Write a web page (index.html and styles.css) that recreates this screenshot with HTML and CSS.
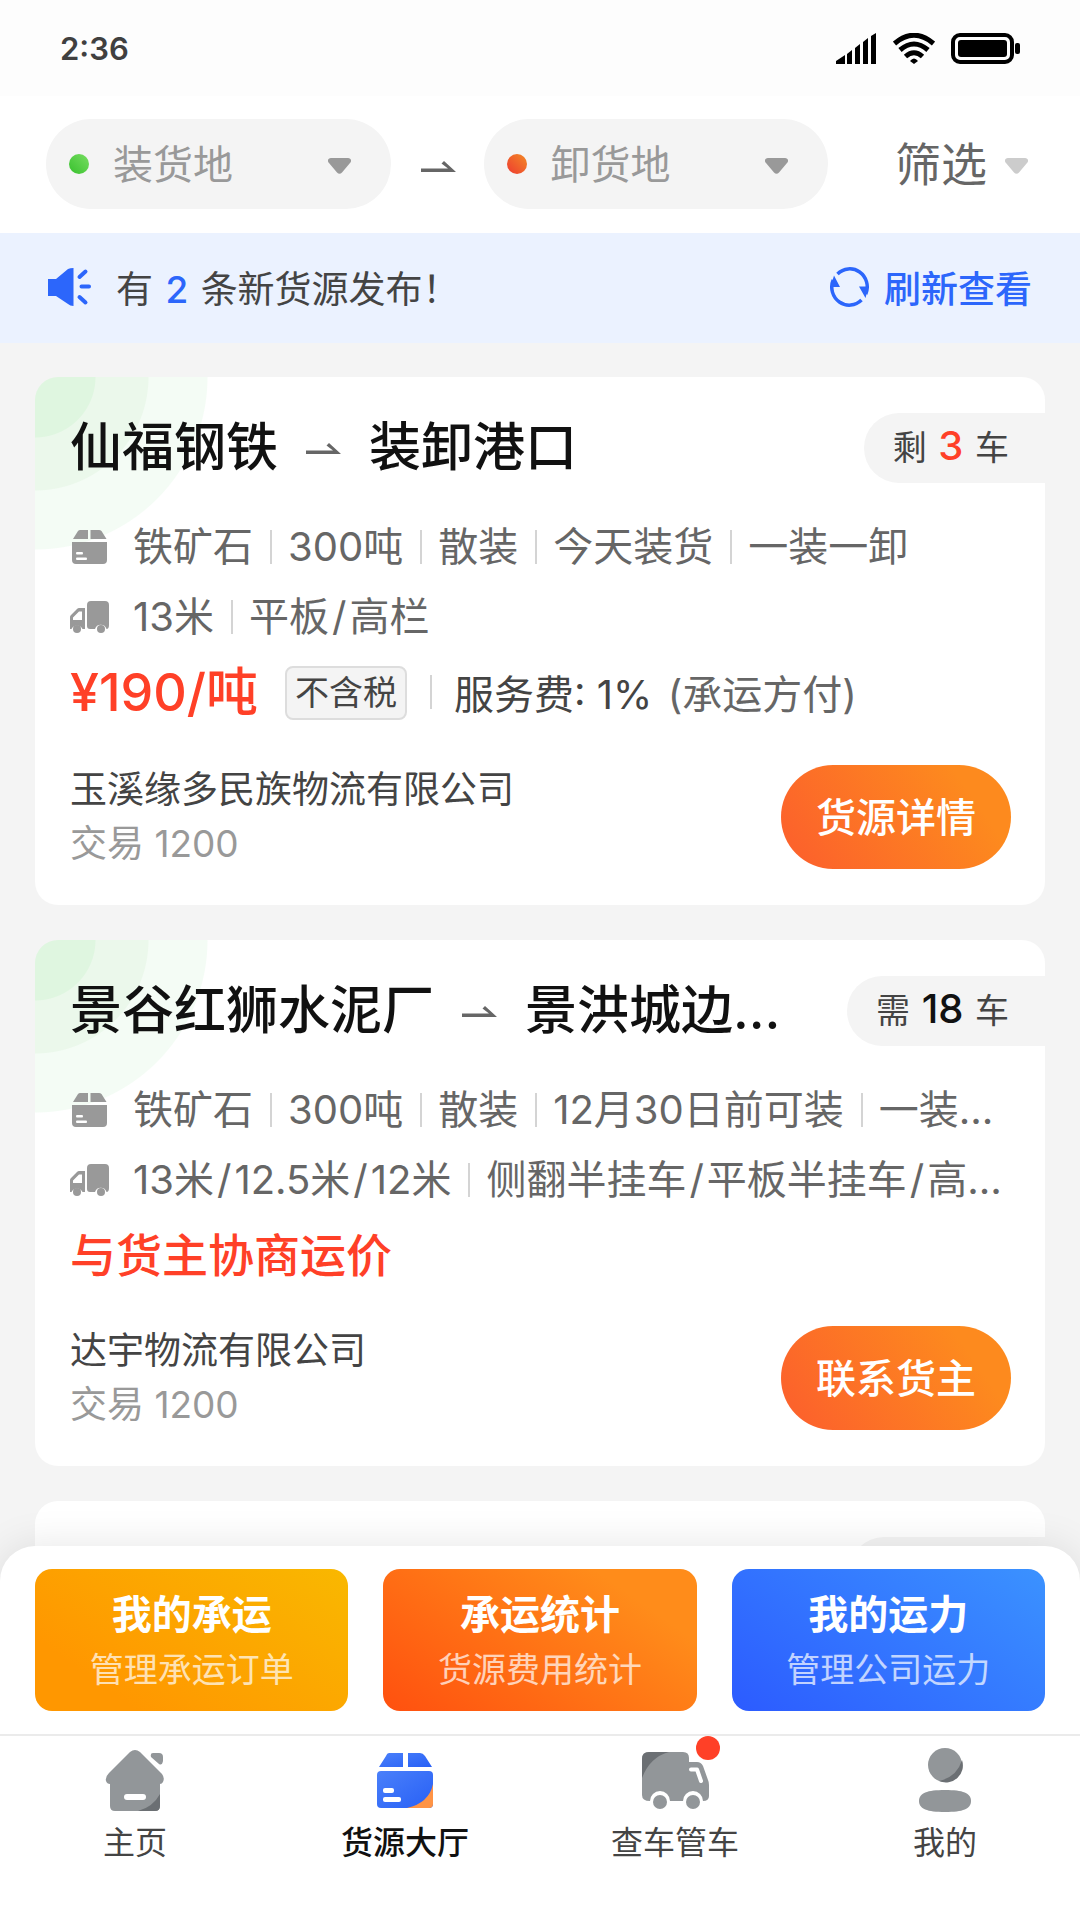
FILE: index.html
```html
<!DOCTYPE html>
<html lang="zh-CN">
<head>
<meta charset="utf-8">
<meta name="viewport" content="width=device-width, initial-scale=1">
<title>货源大厅</title>
<link rel="stylesheet" href="styles.css">
</head>
<body>
<svg class="defs" width="0" height="0" aria-hidden="true">
  <defs>
    <symbol id="caret" viewBox="0 0 23 16"><path d="M3 0H20C23 0 24 3 22 5L14 14.500Q11.500 17 9 14.500L1 5C-1 3 0 0 3 0Z"/></symbol>
    <symbol id="arrow" viewBox="0 0 35 11"><path d="M0 11V7.500H27L20.500 2.500L23 0L35 11Z"/></symbol>
    <symbol id="box" viewBox="0 0 36 36"><path d="M8 1H16V10H1L6 2Q7 1 8 1ZM18.500 1H27Q28.500 1 29.500 2L34.500 10H18.500Z"/><path fill-rule="evenodd" d="M0 13H35V31Q35 35 31 35H4Q0 35 0 31ZM5 23H10Q11 23 11 24.300T10 25.500H5Q4 25.500 4 24.300T5 23ZM5 28.500H14Q15 28.500 15 29.800T14 31H5Q4 31 4 29.800T5 28.500Z"/></symbol>
    <symbol id="lorry" viewBox="0 0 39 32"><path d="M21 0H35Q39 0 39 4V24Q39 28 36.500 28A6 6 0 0 0 25 28H20Q17 28 17 25V4Q17 0 21 0Z"/><path fill-rule="evenodd" d="M9 7H15V28H12.500A6 6 0 0 0 1.500 28H0V16Q0 15 1 14L7 8Q8 7 9 7ZM9 10.500L3 16.500V19H12V10.500Z"/><circle cx="7" cy="28" r="4"/><circle cx="31" cy="28" r="4"/></symbol>
  </defs>
</svg>
<div class="app">
  <header class="status">
    <time class="clock">2:36</time>
    <div class="status-icons">
      <svg width="41" height="31" viewBox="0 0 41 31"><path d="M0 31V28L9 22V31ZM11 31V21L16 17V31ZM19 31V15L24 11V31ZM27 31V9L32 5V31ZM35 31V3L40 0V31Z"/></svg>
      <svg width="42" height="31" viewBox="0 0 42 31" fill="none" stroke="#000" stroke-width="5"><path d="M1.500 10.500Q21 -6 40.500 10.500M7 17Q21 5 35 17M12.500 23.500Q21 16 29.500 23.500"/><path fill="#000" stroke="none" d="M17 28Q21 23 25 28L21 31Z"/></svg>
      <svg width="69" height="31" viewBox="0 0 69 31"><rect x="2" y="2" width="59" height="27" rx="7" fill="none" stroke="#000" stroke-width="4"/><rect x="7" y="7" width="49" height="17" rx="3"/><rect x="64" y="10" width="5" height="11" rx="2"/></svg>
    </div>
  </header>

  <div class="filters">
    <label class="place">
      <span class="dot dot-from"></span>
      <select class="place-select" aria-label="装货地"><option>装货地</option></select>
      <svg class="caret" width="23" height="16"><use href="#caret"/></svg>
    </label>
    <svg class="arrow" width="35" height="11"><use href="#arrow"/></svg>
    <label class="place">
      <span class="dot dot-to"></span>
      <select class="place-select" aria-label="卸货地"><option>卸货地</option></select>
      <svg class="caret" width="23" height="16"><use href="#caret"/></svg>
    </label>
    <button class="filter-btn" type="button">筛选<svg class="caret caret-light" width="23" height="16"><use href="#caret"/></svg></button>
  </div>

  <div class="notice">
    <svg width="44" height="38" viewBox="0 0 44 38" fill="#2c66fb"><path d="M0 11H8L20 1Q22 0 25.500 0V38Q22 38 20 36L8 28H0Z"/><path fill="none" stroke="#2c66fb" stroke-width="4" stroke-linecap="round" d="M31.500 9L37.500 3.500M33.500 18.500H41M31.500 29L37.500 34.500"/></svg>
    <p class="notice-text">有 <b>2</b> 条新货源发布！</p>
    <button class="refresh" type="button">
      <svg width="39" height="40" viewBox="0 0 39 40" fill="none" stroke="#2c66fb" stroke-width="3.500"><path d="M7.500 7A17.500 18 0 0 1 35.800 27M31.500 33A17.500 18 0 0 1 3.200 13"/><path fill="#2c66fb" stroke="none" d="M29 19.500H38.500L35.500 31ZM10 20H0.500L4 8.500Z"/></svg>
      刷新查看
    </button>
  </div>

  <main class="list">
    <article class="card">
      <div class="head">
        <h2 class="route"><span>仙福钢铁</span><svg class="arrow" width="35" height="11"><use href="#arrow"/></svg><span class="dest">装卸港口</span></h2>
        <p class="count">剩 <b class="hot">3</b> 车</p>
      </div>
      <div class="facts">
        <svg class="fact-icon" width="36" height="36"><use href="#box"/></svg>
        <ul><li>铁矿石</li><li>300吨</li><li>散装</li><li>今天装货</li><li>一装一卸</li></ul>
      </div>
      <div class="facts">
        <svg class="fact-icon fact-lorry" width="39" height="32"><use href="#lorry"/></svg>
        <ul><li>13米</li><li>平板<span class="or">/</span>高栏</li></ul>
      </div>
      <div class="price-row">
        <strong class="price">¥190/吨</strong>
        <span class="tax">不含税</span>
        <p class="fee">服务费: 1% <span>(承运方付)</span></p>
      </div>
      <div class="foot">
        <div class="owner"><p>玉溪缘多民族物流有限公司</p><p class="deals">交易 1200</p></div>
        <button class="cta" type="button">货源详情</button>
      </div>
    </article>

    <article class="card">
      <div class="head">
        <h2 class="route"><span>景谷红狮水泥厂</span><svg class="arrow" width="35" height="11"><use href="#arrow"/></svg><span class="dest">景洪城边…</span></h2>
        <p class="count">需 <b>18</b> 车</p>
      </div>
      <div class="facts">
        <svg class="fact-icon" width="36" height="36"><use href="#box"/></svg>
        <ul><li>铁矿石</li><li>300吨</li><li>散装</li><li>12月30日前可装</li><li>一装…</li></ul>
      </div>
      <div class="facts">
        <svg class="fact-icon fact-lorry" width="39" height="32"><use href="#lorry"/></svg>
        <ul><li>13米<span class="or">/</span>12.5米<span class="or">/</span>12米</li><li>侧翻半挂车<span class="or">/</span>平板半挂车<span class="or">/</span>高…</li></ul>
      </div>
      <div class="price-row">
        <strong class="price price-talk">与货主协商运价</strong>
      </div>
      <div class="foot">
        <div class="owner"><p>达宇物流有限公司</p><p class="deals">交易 1200</p></div>
        <button class="cta" type="button">联系货主</button>
      </div>
    </article>

    <article class="card card-next">
      <div class="head"><span class="count count-empty"></span></div>
    </article>
  </main>

  <footer class="dock">
    <div class="quick">
      <a class="quick-card amber" href="#orders"><b>我的承运</b><span>管理承运订单</span></a>
      <a class="quick-card orange" href="#stats"><b>承运统计</b><span>货源费用统计</span></a>
      <a class="quick-card blue" href="#fleet"><b>我的运力</b><span>管理公司运力</span></a>
    </div>
    <nav class="tabs">
      <a class="tab" href="#home">
        <svg width="68" height="66" viewBox="0 0 68 66"><path fill="#929699" d="M29 4Q34 0 39 4L61 26Q64 30 62 34Q61 36 59 36V58Q59 63 54 63H14Q9 63 9 58V36Q6 36 5 33Q4 29 8 25ZM52 5H58Q62 5 62 9V13Q61 18 58 16L50 9Q49 5 52 5Z"/><path fill="#6b6f73" d="M59 46V58Q59 63 54 63H37Q52 59 59 46Z"/><rect x="23" y="46" width="22" height="6" rx="3" fill="#fff"/></svg>
        <span>主页</span>
      </a>
      <a class="tab active" href="#hall" aria-current="page">
        <svg width="68" height="66" viewBox="0 0 68 66"><defs><linearGradient id="bluebox" x1="0" y1="0" x2="1" y2="1"><stop offset="0" stop-color="#4a80fa"/><stop offset="1" stop-color="#2860f6"/></linearGradient></defs><path fill="url(#bluebox)" d="M18 5H32V19H8L15 8Q16 5 18 5ZM37 5H49Q52 5 54 8L61 19H37Z"/><path fill="url(#bluebox)" d="M10 23H58Q62 23 62 27V56Q62 60 58 60H10Q6 60 6 56V27Q6 23 10 23Z"/><path fill="#ff9445" d="M62 36V56Q62 60 58 60H36Q58 55 62 36Z"/><rect x="12" y="40" width="11" height="5" rx="2" fill="#fff"/><rect x="12" y="49" width="18" height="5" rx="2" fill="#fff"/></svg>
        <span>货源大厅</span>
      </a>
      <a class="tab" href="#trucks">
        <svg width="68" height="66" viewBox="0 0 68 66"><path fill="#929699" d="M8 4H42Q48 4 48 10V14H56Q60 14 62 18L67 32Q68 34 68 37V48Q68 53 62 53A10 10 0 0 0 42 53H29A10 10 0 0 0 9 53Q1 53 1 47V11Q1 4 8 4Z"/><path fill="#6b6f73" d="M28 4H8Q1 4 1 11V30Q9 9 28 4Z"/><path fill="none" stroke="#fff" stroke-width="4" stroke-linecap="round" stroke-linejoin="round" d="M50 21.500H56L60 33"/><circle cx="19" cy="54" r="7" fill="#929699"/><circle cx="52" cy="54" r="7" fill="#929699"/></svg>
        <span>查车管车</span>
        <i class="alert"></i>
      </a>
      <a class="tab" href="#me">
        <svg width="68" height="66" viewBox="0 0 68 66"><circle cx="34" cy="17" r="17" fill="#929699"/><path fill="#6b6f73" d="M51 12A17 17 0 0 1 28 33Q46 29 51 12Z"/><path fill="#929699" d="M8 53C8 45 16 42 34 42S60 45 60 53S52 64 34 64S8 61 8 53Z"/></svg>
        <span>我的</span>
      </a>
    </nav>
  </footer>
</div>
</body>
</html>
```
FILE: styles.css
```css
* { box-sizing: border-box; }
body, h2, p, ul { margin: 0; padding: 0; }
body {
  font-family: Inter, "Noto Sans CJK SC", sans-serif;
  font-size: 40px;
  color: #444;
  background: #f4f4f4;
}
ul { list-style: none; }
a { color: inherit; text-decoration: none; }
b, strong, h2 { font-weight: 500; }
button, select {
  font: inherit;
  color: inherit;
  background: none;
  border: 0;
  padding: 0;
  appearance: none;
}
svg { flex: none; display: block; }
.defs { position: absolute; }

.app {
  display: flex;
  flex-direction: column;
  height: 100vh;
  overflow: hidden;
}

/* status bar */
.status {
  flex: none;
  display: flex;
  align-items: center;
  justify-content: space-between;
  height: 96px;
  padding: 0 60px;
  background: #fdfdfd;
}
.clock { font-size: 31px; font-weight: 600; color: #404040; }
.status-icons { display: flex; gap: 16px; }

/* place filters */
.filters {
  flex: none;
  display: flex;
  align-items: center;
  padding: 23px 52px 24px 46px;
  background: #fff;
}
.place {
  flex: 1;
  min-width: 0;
  display: flex;
  align-items: center;
  height: 90px;
  padding: 0 40px 0 23px;
  border-radius: 45px;
  background: #f4f4f4;
}
.dot { flex: none; width: 20px; height: 20px; border-radius: 50%; }
.dot-from { background: linear-gradient(45deg, #37c02d, #78de62); }
.dot-to { background: linear-gradient(45deg, #ee3a30, #f28a26); }
.place-select { flex: 1; min-width: 0; margin-left: 24px; color: #999; opacity: 1; }
.caret { margin-top: 3px; fill: #999; }
.caret-light { fill: #ccc; }
.arrow { fill: #666; }
.filters .arrow { margin: 4px 28px 0 30px; }
.filter-btn {
  display: flex;
  align-items: center;
  gap: 18px;
  margin-left: 67px;
  font-size: 46px;
  line-height: 60px;
  color: #666;
}

/* new cargo notice */
.notice {
  flex: none;
  display: flex;
  align-items: center;
  height: 110px;
  padding: 0 48px 3px;
  background: #ebf2ff;
  font-size: 37px;
}
.notice-text { margin-left: 24px; }
.notice-text b { margin: 0 2px; color: #2c66fb; }
.refresh {
  display: flex;
  align-items: center;
  gap: 15px;
  margin-left: auto;
  font-weight: 500;
  color: #2c66fb;
}

/* cargo cards */
.list {
  flex: 1;
  min-height: 0;
  display: flex;
  flex-direction: column;
  gap: 35px;
  padding: 34px 35px 0;
  overflow: hidden;
}
.card {
  flex: none;
  padding: 36px 34px 34px 35px;
  border-radius: 23px;
  background: radial-gradient(circle at 0 0, #dff6e0 60px, #ebf8eb 61px, #ebf8eb 113px, #f4fcf5 114px, #f4fcf5 172px, #fff 173px);
}
.card-next { height: 526px; background: #fff; }
.head {
  display: flex;
  justify-content: space-between;
  gap: 35px;
  height: 70px;
  margin: 0 -34px 29px 0;
}
.route {
  flex: 0 1 auto;
  min-width: 0;
  display: flex;
  align-items: center;
  gap: 28px;
  font-size: 52px;
  line-height: 74px;
  white-space: nowrap;
  color: #111;
}
.route .arrow { flex: none; }
.dest { min-width: 0; overflow: hidden; text-overflow: ellipsis; }
.count {
  flex: none;
  margin-left: auto;
  padding: 0 36px 0 29px;
  border-radius: 35px 0 0 35px;
  background: #f4f4f4;
  font-size: 34px;
  line-height: 70px;
}
.count b { margin: 0 2px; font-size: 40px; line-height: 40px; color: #111; }
.count .hot { color: #ff4027; }
.count-empty { width: 196px; }
.facts {
  display: flex;
  align-items: center;
  height: 70px;
  color: #666;
}
.fact-icon { margin: 0 25px 0 2px; fill: #999; }
.fact-lorry { margin: 0 24px 0 0; }
.facts ul { flex: 1; min-width: 0; display: flex; }
.facts li { flex: none; line-height: 60px; white-space: nowrap; }
.facts li:last-child { flex: 0 1 auto; min-width: 0; overflow: hidden; text-overflow: ellipsis; }
.or { margin: 0 3px; }
.facts li + li, .fee {
  margin-left: 17px;
  padding-left: 18px;
  background: linear-gradient(#d4d4d4, #d4d4d4) 0 50% / 2px 34px no-repeat;
}
.price-row { display: flex; align-items: center; min-height: 80px; }
.price { font-size: 52px; line-height: 82px; color: #ff4027; }
.price-talk { font-size: 46px; line-height: 80px; }
.tax {
  margin-left: 27px;
  padding: 0 8px;
  border: 2px solid #ddd;
  border-radius: 8px;
  background: #f4f4f4;
  font-size: 34px;
  line-height: 50px;
}
.fee { margin: 0 0 3px 23px; padding-left: 24px; }
.fee span { margin-left: 4px; color: #666; }
.foot {
  display: flex;
  align-items: center;
  justify-content: space-between;
  margin-top: 29px;
}
.owner { font-size: 37px; line-height: 54px; }
.deals { color: #999; }
.cta {
  height: 104px;
  padding: 0 35px 4px;
  border-radius: 52px;
  background: linear-gradient(55deg, #fc632b 10%, #fd8a1e 80%);
  font-weight: 500;
  color: #fff;
}

/* bottom dock */
.dock {
  flex: none;
  position: relative;
  margin-top: -36px;
  border-radius: 35px 35px 0 0;
  background: #fff;
  box-shadow: 0 0 40px rgba(0, 0, 0, .1);
}
.quick {
  display: grid;
  grid-template-columns: repeat(3, 1fr);
  gap: 35px;
  padding: 23px 35px;
  border-bottom: 2px solid #ebebeb;
}
.quick-card {
  display: flex;
  flex-direction: column;
  align-items: center;
  padding: 18px 0 14px;
  border-radius: 17px;
  color: #fff;
}
.quick-card b { font-weight: 600; line-height: 56px; }
.quick-card span { font-size: 34px; line-height: 54px; opacity: .7; }
.amber { background: linear-gradient(35deg, #ff9700 20%, #f9b800); }
.orange { background: linear-gradient(35deg, #ff500f, #ff8c1a 80%); }
.blue { background: linear-gradient(35deg, #2c5bff, #3b92ff); }
.tabs { display: grid; grid-template-columns: repeat(4, 1fr); height: 184px; }
.tab {
  position: relative;
  display: flex;
  flex-direction: column;
  align-items: center;
  padding-top: 12px;
  font-size: 32px;
  line-height: 58px;
}
.tab.active { font-weight: 500; color: #111; }
.alert {
  position: absolute;
  top: 0;
  left: 50%;
  width: 24px;
  height: 24px;
  margin-left: 21px;
  border-radius: 50%;
  background: #ff4027;
}
```
